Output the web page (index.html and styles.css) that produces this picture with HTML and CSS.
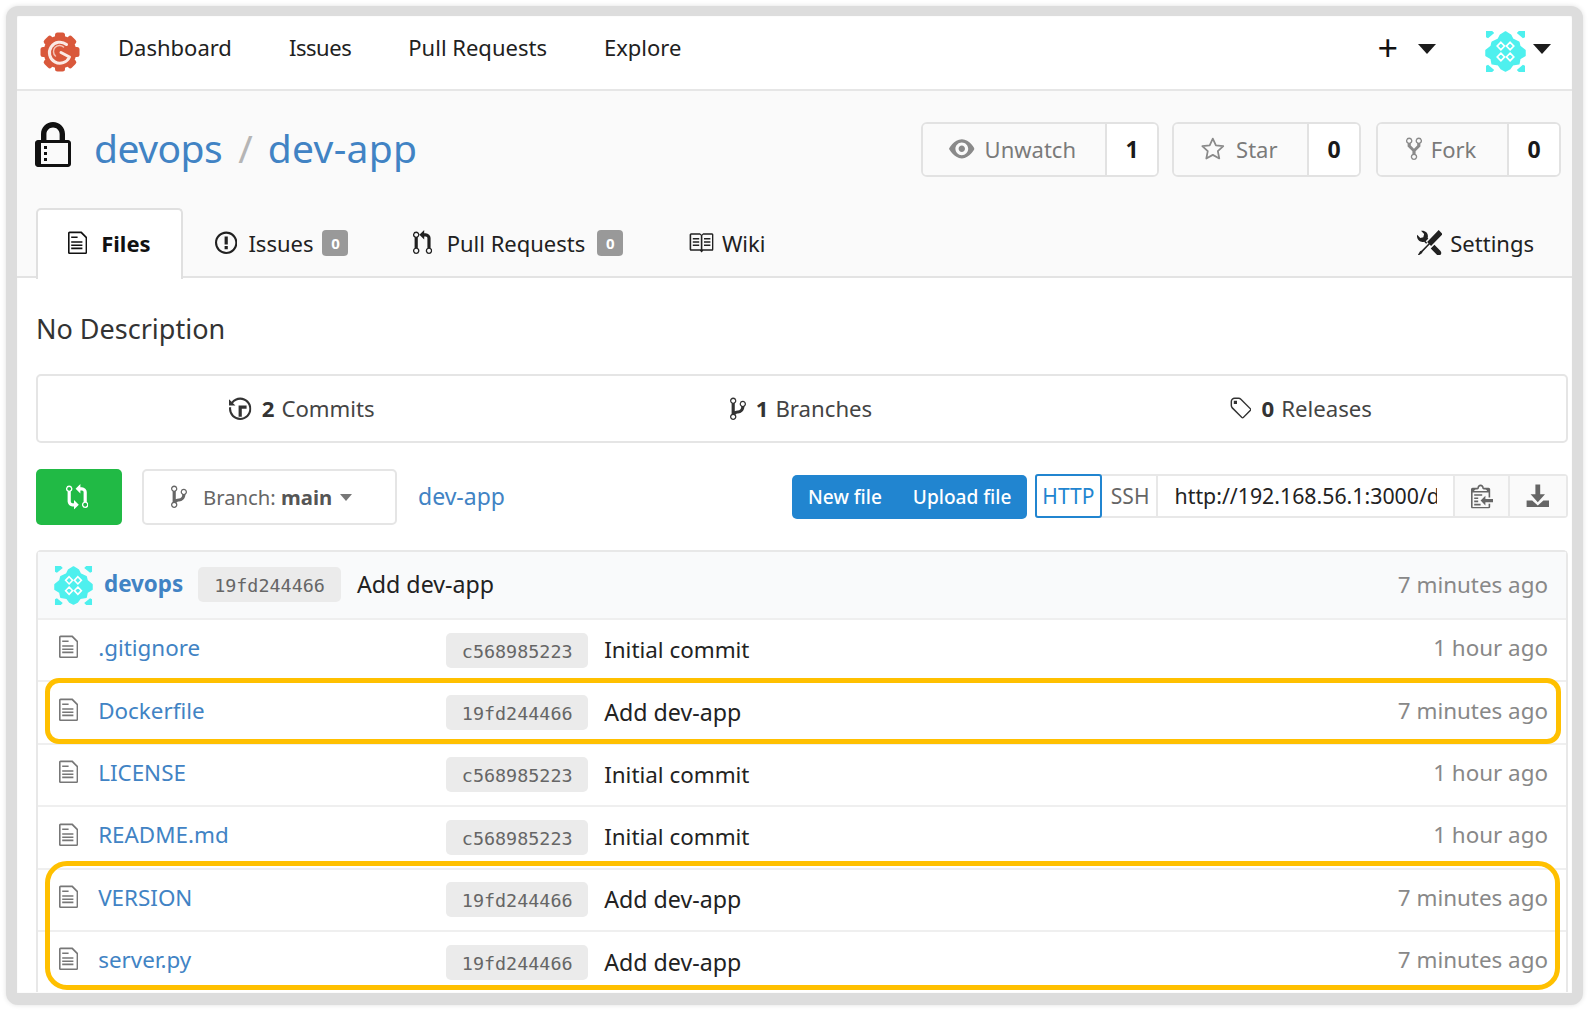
FILE: index.html
```html
<!DOCTYPE html>
<html lang="en">
<head>
<meta charset="utf-8">
<title>devops / dev-app</title>
<link rel="stylesheet" href="styles.css">
</head>
<body>
<svg class="defs" width="0" height="0" aria-hidden="true">
  <symbol id="i-file" viewBox="0 0 12 16"><path d="M6 5H2V4h4v1zM2 8h7V7H2v1zm0 2h7V9H2v1zm0 2h7v-1H2v1zm10-7.500V14c0 .55-.45 1-1 1H1c-.55 0-1-.45-1-1V2c0-.55.45-1 1-1h7.500L12 4.500zM11 5L8 2H1v12h10V5z"/></symbol>
  <symbol id="i-issue" viewBox="0 0 14 16"><path d="M7 2.300c3.140 0 5.700 2.560 5.700 5.700s-2.560 5.700-5.700 5.700A5.710 5.710 0 0 1 1.300 8c0-3.140 2.560-5.700 5.700-5.700zM7 1C3.140 1 0 4.140 0 8s3.140 7 7 7 7-3.140 7-7-3.140-7-7-7zm1 3H6v5h2V4zm0 6H6v2h2v-2z"/></symbol>
  <symbol id="i-pr" viewBox="0 0 12 16"><path d="M11 11.280V5c-.03-.78-.34-1.470-.94-2.060C9.460 2.350 8.780 2.030 8 2H7V0L4 3l3 3V4h1c.27.02.48.11.69.31.21.2.3.42.31.69v6.280A1.993 1.993 0 0 0 10 15a1.993 1.993 0 0 0 1-3.720zm-1 2.920c-.66 0-1.200-.55-1.200-1.200 0-.65.55-1.200 1.200-1.200.65 0 1.200.55 1.200 1.200 0 .65-.55 1.200-1.200 1.200zM4 3c0-1.110-.89-2-2-2a1.993 1.993 0 0 0-1 3.720v6.560A1.993 1.993 0 0 0 2 15a1.993 1.993 0 0 0 1-3.720V4.720c.59-.34 1-.98 1-1.720zm-.8 10c0 .66-.55 1.200-1.200 1.200-.65 0-1.200-.55-1.200-1.200 0-.65.55-1.200 1.200-1.200.65 0 1.200.55 1.200 1.200zM2 4.200C1.340 4.200.8 3.650.8 3c0-.65.55-1.200 1.200-1.200.65 0 1.200.55 1.200 1.200 0 .65-.55 1.200-1.200 1.200z"/></symbol>
  <symbol id="i-book" viewBox="0 0 16 16"><path d="M3 5h4v1H3V5zm0 3h4V7H3v1zm0 2h4V9H3v1zm11-5h-4v1h4V5zm0 2h-4v1h4V7zm0 2h-4v1h4V9zm2-6v9c0 .55-.45 1-1 1H9.500l-1 1-1-1H2c-.55 0-1-.45-1-1V3c0-.55.45-1 1-1h5.500l1 1 1-1H15c.55 0 1 .45 1 1zm-8 .5L7.500 3H2v9h6V3.500zm7-.5H9.500l-.5.5V12h6V3z"/></symbol>
  <symbol id="i-tools" viewBox="0 0 16 16"><path d="M4.480 7.270c.26.26 1.280 1.330 1.280 1.330l.56-.58-.88-.91 1.690-1.800s-.76-.74-.43-.45c.32-1.190.03-2.510-.87-3.440C4.930.5 3.660.2 2.520.51l1.930 2-.51 1.960-1.890.52-1.930-2C-.19 4.170.1 5.480 1 6.400c.94.98 2.320 1.260 3.480.87zm6.440 1.940l-2.330 2.300 3.840 3.980c.31.33.73.49 1.140.49.41 0 .82-.16 1.140-.49.63-.65.63-1.700 0-2.350l-3.790-3.930zM16 2.530L13.550 0 6.330 7.460l.88.91-4.310 4.460-.99.53-1.390 2.270.35.37 2.200-1.440.51-1.020L7.900 9.080l.88.91L16 2.530z"/></symbol>
  <symbol id="i-eye" viewBox="0 0 16 16"><path d="M8.060 2C3 2 0 8 0 8s3 6 8.060 6C13 14 16 8 16 8s-3-6-7.940-6zM8 12c-2.200 0-4-1.780-4-4 0-2.200 1.800-4 4-4 2.220 0 4 1.800 4 4 0 2.220-1.780 4-4 4zm2-4c0 1.110-.89 2-2 2-1.110 0-2-.89-2-2 0-1.110.89-2 2-2 1.110 0 2 .89 2 2z"/></symbol>
  <symbol id="i-star" viewBox="0 0 16 16"><path d="M8 1.600l1.950 4.200 4.600.55-3.400 3.150.9 4.550L8 11.800l-4.050 2.250.9-4.550-3.400-3.150 4.600-.55z" fill="none" stroke="currentColor" stroke-width="1.100" stroke-linejoin="round"/></symbol>
  <symbol id="i-fork" viewBox="0 0 10 16"><path d="M8 1a1.993 1.993 0 0 0-1 3.720V6L5 8 3 6V4.720A1.993 1.993 0 0 0 2 1a1.993 1.993 0 0 0-1 3.720V6.500l3 3v1.780A1.993 1.993 0 0 0 5 15a1.993 1.993 0 0 0 1-3.720V9.500l3-3V4.720A1.993 1.993 0 0 0 8 1zM2 4.200C1.340 4.200.8 3.650.8 3c0-.65.55-1.200 1.200-1.200.65 0 1.200.55 1.200 1.200 0 .65-.55 1.200-1.200 1.200zm3 10c-.66 0-1.200-.55-1.200-1.200 0-.65.55-1.200 1.200-1.200.65 0 1.200.55 1.200 1.200 0 .65-.55 1.200-1.200 1.200zm3-10c-.66 0-1.200-.55-1.200-1.200 0-.65.55-1.200 1.200-1.200.65 0 1.200.55 1.200 1.200 0 .65-.55 1.200-1.200 1.200z"/></symbol>
  <symbol id="i-branch" viewBox="0 0 10 16"><path d="M10 5c0-1.110-.89-2-2-2a1.993 1.993 0 0 0-1 3.720v.3c-.02.52-.23.98-.63 1.380-.4.4-.86.61-1.380.63-.83.02-1.480.16-2 .45V4.720a1.993 1.993 0 0 0-1-3.720C.88 1 0 1.890 0 3a2 2 0 0 0 1 1.720v6.560c-.59.35-1 .99-1 1.720 0 1.110.89 2 2 2 1.110 0 2-.89 2-2 0-.53-.2-1-.53-1.360.09-.06.48-.41.59-.47.25-.11.56-.17.94-.17 1.050-.05 1.950-.45 2.750-1.250S8.950 7.770 9 6.730h-.02C9.590 6.370 10 5.730 10 5zM2 1.800c.66 0 1.200.55 1.200 1.200 0 .65-.55 1.200-1.200 1.200C1.350 4.200.8 3.650.8 3c0-.65.55-1.200 1.200-1.200zm0 12.410c-.66 0-1.200-.55-1.200-1.200 0-.65.55-1.200 1.200-1.200.65 0 1.200.55 1.200 1.200 0 .65-.55 1.200-1.200 1.200zm6-8c-.66 0-1.200-.55-1.200-1.200 0-.65.55-1.200 1.200-1.200.65 0 1.200.55 1.200 1.200 0 .65-.55 1.200-1.200 1.200z"/></symbol>
  <symbol id="i-history" viewBox="0 0 14 16"><path d="M8 13H6V6h5v2H8v5zM7 1C4.810 1 2.870 2.020 1.590 3.590L0 2v4h4L2.500 4.500C3.550 3.170 5.170 2.300 7 2.300c3.140 0 5.700 2.560 5.700 5.700s-2.560 5.700-5.700 5.700A5.710 5.710 0 0 1 1.300 8c0-.34.03-.67.09-1H.08C.03 7.330 0 7.660 0 8c0 3.860 3.140 7 7 7s7-3.140 7-7-3.140-7-7-7z"/></symbol>
  <symbol id="i-tag" viewBox="0 0 14 16"><path d="M7.730 1.730C7.260 1.260 6.620 1 5.960 1H3.500C2.130 1 1 2.130 1 3.500v2.470c0 .66.27 1.300.73 1.770l6.060 6.060c.39.39 1.020.39 1.410 0l4.590-4.590a.996.996 0 0 0 0-1.410L7.730 1.730zM2.380 7.090c-.31-.3-.47-.7-.47-1.130V3.500c0-.88.72-1.590 1.590-1.590h2.470c.42 0 .83.16 1.130.47l6.140 6.130-4.730 4.730-6.130-6.150zM3.010 3h2v2H3V3h.01z"/></symbol>
  <symbol id="i-clip" viewBox="0 0 14 16"><path d="M2 13h4v1H2v-1zm5-6H2v1h5V7zm2 3V8l-3 3 3 3v-2h5v-2H9zM4.500 9H2v1h2.500V9zM2 12h2.500v-1H2v1zm9 1h1v2c-.02.28-.11.52-.3.7-.19.18-.42.28-.7.3H1c-.55 0-1-.45-1-1V4c0-.55.45-1 1-1h3c0-1.110.89-2 2-2 1.110 0 2 .89 2 2h3c.55 0 1 .45 1 1v5h-1V6H1v9h10v-2zM2 5h8c0-.55-.45-1-1-1H8c-.55 0-1-.45-1-1s-.45-1-1-1-1 .45-1 1-.45 1-1 1H3c-.55 0-1 .45-1 1z"/></symbol>
  <symbol id="i-download" viewBox="0 0 16 16"><path d="M6.500 1h3v6h3L8 12 3.500 7h3zM1 11h3.500L8 14l3.500-3H15v4H1z"/></symbol>
  <symbol id="i-lock" viewBox="0 0 12 16"><path d="M4 13H3v-1h1v1zm8-6v7c0 .55-.45 1-1 1H1c-.55 0-1-.45-1-1V7c0-.55.45-1 1-1h1V4c0-2.200 1.800-4 4-4s4 1.800 4 4v2h1c.55 0 1 .45 1 1zM3.800 6h4.410V4c0-1.220-.98-2.200-2.200-2.200-1.220 0-2.200.98-2.200 2.200v2H3.800zM11 7H2v7h9V7zM4 8H3v1h1V8zm0 2H3v1h1v-1z"/></symbol>
  <symbol id="i-compare" viewBox="0 0 14 16"><path d="M5 12H4c-.27-.02-.48-.11-.69-.31-.21-.2-.3-.42-.31-.69V4.720A1.993 1.993 0 0 0 2 1a1.993 1.993 0 0 0-1 3.720V11c.03.78.34 1.470.94 2.060.6.59 1.280.91 2.060.94h1v2l3-3-3-3v2zM2 1.800c.66 0 1.200.55 1.200 1.200 0 .65-.55 1.200-1.200 1.200C1.350 4.200.8 3.650.8 3c0-.65.55-1.200 1.200-1.200zm11 9.480V5c-.03-.78-.34-1.470-.94-2.060-.6-.59-1.280-.91-2.060-.94H9V0L6 3l3 3V4h1c.27.02.48.11.69.31.21.2.3.42.31.69v6.280A1.993 1.993 0 0 0 12 15a1.993 1.993 0 0 0 1-3.720zm-1 2.920c-.66 0-1.200-.55-1.200-1.200 0-.65.55-1.200 1.200-1.200.65 0 1.200.55 1.200 1.200 0 .65-.55 1.200-1.200 1.200z"/></symbol>
  <symbol id="i-avatar" viewBox="0 0 40 40">
    <path fill="#4ef0ee" stroke="#4ef0ee" stroke-width="1.500" stroke-linejoin="round" d="M20 1l5 3 2 4 6 3 1 4 5 4v5l-5 3-1 5-6 1-3 4-4 2-4-2-3-4-6-1-1-5-5-3v-5l5-4 1-4 6-3 2-4z"/>
    <path fill="#4ef0ee" d="M1 0h6l2 2-6 5-2-1zM39 0h-6l-2 2 6 5 2-1zM1 40h6l2-2-6-5-2 1zM39 40h-6l-2-2 6-5 2 1z"/>
    <g fill="none" stroke="#fff" stroke-width="1.600"><path d="M15.500 11l3.600 3.700-3.600 3.700-3.600-3.700zM24.500 11l3.600 3.700-3.600 3.700-3.600-3.700zM15.500 21.600l3.600 3.700-3.600 3.700-3.600-3.700zM24.500 21.600l3.600 3.700-3.600 3.700-3.600-3.700z"/></g>
  </symbol>
</svg>

<div class="frame">
  <nav class="nav">
    <svg class="logo" viewBox="0 0 40 40">
      <g fill="#d9583b">
        <circle cx="20" cy="20" r="16.500"/>
        <rect x="15" y="0.500" width="10" height="8" rx="2.500"/>
        <rect x="15" y="0.500" width="10" height="8" rx="2.500" transform="rotate(45 20 20)"/>
        <rect x="15" y="0.500" width="10" height="8" rx="2.500" transform="rotate(90 20 20)"/>
        <rect x="15" y="0.500" width="10" height="8" rx="2.500" transform="rotate(135 20 20)"/>
        <rect x="15" y="0.500" width="10" height="8" rx="2.500" transform="rotate(180 20 20)"/>
        <rect x="15" y="0.500" width="10" height="8" rx="2.500" transform="rotate(225 20 20)"/>
        <rect x="15" y="0.500" width="10" height="8" rx="2.500" transform="rotate(270 20 20)"/>
        <rect x="15" y="0.500" width="10" height="8" rx="2.500" transform="rotate(315 20 20)"/>
      </g>
      <path d="M26.500 12.500A10.500 10.500 0 1 0 29.500 25L21 20.500" fill="none" stroke="#fbe9e4" stroke-width="3" stroke-linecap="round" stroke-linejoin="round"/>
      <path d="M23.500 15A6 6 0 1 0 15.500 24" fill="none" stroke="#f4c3b6" stroke-width="1.500" stroke-linecap="round"/>
    </svg>
    <div class="nav-links">
      <a class="nav-link">Dashboard</a>
      <a class="nav-link nav-tight">Issues</a>
      <a class="nav-link">Pull Requests</a>
      <a class="nav-link">Explore</a>
    </div>
    <div class="nav-right">
      <span class="plus">+</span>
      <span class="caret caret-plus"></span>
      <svg class="nav-avatar"><use href="#i-avatar"/></svg>
      <span class="caret caret-user"></span>
    </div>
  </nav>

  <header class="head">
    <div class="title-row">
      <h1 class="title">
        <svg class="lock"><use href="#i-lock"/></svg>
        <a class="title-link title-owner">devops</a>
        <span class="slash">/</span>
        <a class="title-link title-repo">dev-app</a>
      </h1>
      <div class="actions">
        <div class="labeled w-watch"><span class="lb-main"><svg class="ic-eye"><use href="#i-eye"/></svg>Unwatch</span><span class="lb-count">1</span></div>
        <div class="labeled w-star"><span class="lb-main"><svg class="ic-star"><use href="#i-star"/></svg>Star</span><span class="lb-count">0</span></div>
        <div class="labeled w-fork"><span class="lb-main"><svg class="ic-fork"><use href="#i-fork"/></svg>Fork</span><span class="lb-count">0</span></div>
      </div>
    </div>
    <div class="tabs">
      <a class="tab tab-active"><svg class="ic-12"><use href="#i-file"/></svg>Files</a>
      <a class="tab tab-issues"><svg class="ic-14"><use href="#i-issue"/></svg>Issues<span class="badge">0</span></a>
      <a class="tab tab-pulls"><svg class="ic-12"><use href="#i-pr"/></svg>Pull Requests<span class="badge">0</span></a>
      <a class="tab tab-wiki"><svg class="ic-16"><use href="#i-book"/></svg>Wiki</a>
      <a class="tab tab-settings"><svg class="ic-16"><use href="#i-tools"/></svg>Settings</a>
    </div>
  </header>

  <main class="content">
    <p class="desc">No Description</p>

    <div class="stats">
      <div class="stat"><svg class="ic-14"><use href="#i-history"/></svg><b>2</b> Commits</div>
      <div class="stat"><svg class="ic-10"><use href="#i-branch"/></svg><b>1</b> Branches</div>
      <div class="stat"><svg class="ic-14"><use href="#i-tag"/></svg><b>0</b> Releases</div>
    </div>

    <div class="toolbar">
      <button class="compare"><svg class="ic-compare"><use href="#i-compare"/></svg></button>
      <button class="branch"><svg class="ic-10"><use href="#i-branch"/></svg><span>Branch: <b>main</b></span><i class="caret-small"></i></button>
      <a class="crumb">dev-app</a>
      <div class="tool-right">
        <div class="blue-group"><span>New file</span><span>Upload file</span></div>
        <div class="clone">
          <span class="proto proto-on">HTTP</span>
          <span class="proto proto-ssh">SSH</span>
          <span class="url"><span class="url-text">http://192.168.56.1:3000/devops/dev-app.git</span></span>
          <span class="clone-ic"><svg class="ic-14"><use href="#i-clip"/></svg></span>
          <span class="clone-ic"><svg class="ic-dl"><use href="#i-download"/></svg></span>
        </div>
      </div>
    </div>

    <section class="table">
      <div class="row row-head">
        <svg class="row-avatar"><use href="#i-avatar"/></svg>
        <a class="author">devops</a>
        <code class="sha">19fd244466</code>
        <span class="msg msg-wide">Add dev-app</span>
        <span class="age">7 minutes ago</span>
      </div>
      <div class="row"><svg class="ic-12 file-ic"><use href="#i-file"/></svg><a class="fname">.gitignore</a><code class="sha">c568985223</code><span class="msg">Initial commit</span><span class="age">1 hour ago</span></div>
      <div class="row"><svg class="ic-12 file-ic"><use href="#i-file"/></svg><a class="fname">Dockerfile</a><code class="sha">19fd244466</code><span class="msg msg-wide">Add dev-app</span><span class="age">7 minutes ago</span></div>
      <div class="row"><svg class="ic-12 file-ic"><use href="#i-file"/></svg><a class="fname">LICENSE</a><code class="sha">c568985223</code><span class="msg">Initial commit</span><span class="age">1 hour ago</span></div>
      <div class="row"><svg class="ic-12 file-ic"><use href="#i-file"/></svg><a class="fname">README.md</a><code class="sha">c568985223</code><span class="msg">Initial commit</span><span class="age">1 hour ago</span></div>
      <div class="row"><svg class="ic-12 file-ic"><use href="#i-file"/></svg><a class="fname">VERSION</a><code class="sha">19fd244466</code><span class="msg msg-wide">Add dev-app</span><span class="age">7 minutes ago</span></div>
      <div class="row"><svg class="ic-12 file-ic"><use href="#i-file"/></svg><a class="fname">server.py</a><code class="sha">19fd244466</code><span class="msg msg-wide">Add dev-app</span><span class="age">7 minutes ago</span></div>
    </section>
  </main>

  <div class="mark mark-one"></div>
  <div class="mark mark-two"></div>
</div>
</body>
</html>
```
FILE: styles.css
```css
* { box-sizing: border-box; }
html, body { margin: 0; padding: 0; background: #fff; }
body {
  width: 1588px;
  height: 1011px;
  padding: 6px 5px 6px 6px;
  overflow: hidden;
  font-family: "Noto Sans", "Open Sans", sans-serif;
  font-size: 22.4px;
  color: #212121;
}
svg { fill: currentColor; flex: none; display: block; }
.defs { position: absolute; }
a { color: #4183c4; text-decoration: none; }

.frame {
  position: relative;
  width: 1577px;
  height: 999px;
  border: solid #dddddd;
  border-width: 10px 11px 12px 11px;
  border-radius: 12px;
  background: #fff;
  overflow: hidden;
  box-shadow: 0 0 5px rgba(0,0,0,.12), inset 0 0 2px rgba(0,0,0,.06);
}

/* nav */
.nav {
  display: flex;
  align-items: center;
  height: 75px;
  padding: 0 21px 2px 23px;
  border-bottom: 2px solid #e6e6e6;
}
.logo { width: 40px; height: 42px; }
.nav-links { display: flex; gap: 57px; margin: -10px 0 0 38px; font-size: 22px; }
.nav-link { color: #212121; }
.nav-tight { letter-spacing: -.45px; }
.nav-right { margin-left: auto; display: flex; align-items: center; }
.plus { font-size: 36px; line-height: 36px; color: #111; font-weight: 400; margin-top: -8px; }
.caret {
  width: 0; height: 0;
  border: 9px solid transparent;
  border-top: 10px solid #1c1c1c;
  border-bottom: 0;
  display: block;
}
.caret-plus { margin-left: 20px; margin-right: 49px; margin-top: -5px; }
.nav-avatar { width: 41px; height: 41px; margin-right: 7px; }
.caret-user { margin-top: -5px; }

/* head */
.head {
  background: #fafafa;
  border-bottom: 2px solid #e3e3e3;
  height: 187px;
  padding: 31px 11px 0 18px;
  font-size: 22px;
}
.title-row { display: flex; justify-content: space-between; align-items: flex-start; height: 55px; }
.title { margin: -2px 0 0; display: flex; align-items: center; height: 55px; font-weight: 400; font-size: 39px; }
.lock { width: 36px; height: 48px; color: #111; margin-right: 23px; margin-top: -3px; }
.title-link { line-height: 55px; }
.title-owner { letter-spacing: -.5px; }
.title-repo { letter-spacing: .3px; }
.slash { color: #b5b5b5; margin: 0 15px 0 16px; }
.actions { display: flex; }
.labeled {
  display: flex;
  height: 55px;
  border: 2px solid #e2e2e2;
  border-radius: 6px;
  overflow: hidden;
}
.w-watch { width: 238px; }
.w-star { width: 189px; margin-left: 13px; }
.w-fork { width: 185px; margin-left: 15px; }
.lb-main {
  flex: 1;
  display: flex;
  align-items: center;
  justify-content: center;
  padding: 0 3px 2px 0;
  color: #7a7a7a;
  background: #fafafa;
  border-right: 2px solid #e2e2e2;
}
.lb-count {
  width: 50px;
  display: flex;
  align-items: center;
  justify-content: center;
  padding-bottom: 2px;
  font-size: 23px;
  font-weight: 700;
  background: #fff;
  color: #1a1a1a;
}
.ic-eye { width: 25.6px; height: 25.6px; margin-right: 10px; color: #8a8a8a; }
.ic-star { width: 25.6px; height: 25.6px; margin-right: 10px; color: #8a8a8a; }
.ic-fork { width: 16px; height: 25.6px; margin-right: 9px; color: #8a8a8a; }

/* tabs */
.tabs { display: flex; align-items: stretch; height: 69px; margin: 31px 0 0 1px; }
.tab {
  display: flex;
  align-items: center;
  color: #212121;
  height: 71px;
  padding-bottom: 2px;
}
.tab-active {
  width: 147px;
  padding: 0 0 3px 30px;
  background: #fff;
  border: 2px solid #e0e0e0;
  border-bottom: 0;
  border-radius: 5px 5px 0 0;
  font-weight: 700;
  color: #111;
}
.tab svg { margin-right: 11px; }
.tab-active svg { margin-right: 14px; }
.tab-issues { margin-left: 32px; }
.tab-pulls { margin-left: 65px; }
.tab-pulls svg { margin-right: 14px; }
.tab-wiki { margin-left: 65px; }
.tab-wiki svg { margin-right: 8px; }
.tab-settings { margin-left: auto; margin-right: 27px; }
.tab-settings svg { margin-right: 8px; }
.ic-10 { width: 16px; height: 25.6px; }
.ic-12 { width: 19.2px; height: 25.6px; }
.ic-14 { width: 22.4px; height: 25.6px; }
.ic-16 { width: 25.6px; height: 25.6px; }
.badge {
  display: flex;
  align-items: center;
  justify-content: center;
  width: 26px;
  height: 26px;
  margin-left: 12px;
  border-radius: 4px;
  background: #999;
  color: #fff;
  font-size: 15px;
  font-weight: 700;
}
.tab-issues .badge { margin-left: 9px; }

/* content */
.content { padding: 0 4px 0 19px; }
.desc { margin: 0; height: 96px; padding-top: 33px; font-size: 27px; line-height: 36px; color: #333; }
.stats {
  display: grid;
  grid-template-columns: 528px 470px 529px;
  height: 69px;
  border: 2px solid #e5e5e5;
  border-radius: 5px;
  font-size: 22.200px;
}
.stat { display: flex; align-items: center; justify-content: center; color: #444; }
.stat svg { margin-right: 10px; color: #333; }
.stat b { margin-right: 7px; color: #333; }

.toolbar { display: flex; align-items: flex-start; margin-top: 26px; height: 56px; }
.compare {
  width: 86px;
  height: 56px;
  display: flex;
  align-items: center;
  justify-content: center;
  background: #21ba45;
  border: 0;
  border-radius: 5px;
  color: #fff;
  padding: 0 4px 0 0;
}
.ic-compare { width: 22.4px; height: 25.6px; }
.branch {
  width: 255px;
  height: 56px;
  margin-left: 20px;
  display: flex;
  align-items: center;
  padding: 0 0 0 27px;
  background: #fff;
  border: 2px solid #e5e5e5;
  border-radius: 5px;
  font: inherit;
  font-size: 20.300px;
  color: #666;
}
.branch svg { margin-right: 16px; color: #666; }
.branch b { color: #555; }
.caret-small {
  display: block;
  margin-left: 8px;
  border: 6px solid transparent;
  border-top: 7px solid #777;
  border-bottom: 0;
}
.crumb { margin-left: 21px; line-height: 54px; font-size: 23px; }
.tool-right { margin-left: auto; display: flex; align-items: flex-start; }
.blue-group {
  display: flex;
  align-items: center;
  width: 235px;
  height: 44px;
  margin-top: 6px;
  padding-left: 16px;
  gap: 31px;
  background: #2185d0;
  border-radius: 5px;
  color: #fff;
  font-size: 19.100px;
  font-weight: 500;
}
.clone { display: flex; width: 533px; height: 44px; margin: 5px 0 0 8px; border: 2px solid #e8e8e8; border-left: 0; border-radius: 4px; font-size: 21.300px; }
.proto { display: flex; align-items: center; justify-content: center; color: #666; border-right: 2px solid #e8e8e8; font-size: 21px; padding-bottom: 1px; }
.proto-ssh { width: 56px; padding-left: 3px; }
.proto-on {
  width: 67px;
  margin: -2px 0;
  color: #2185d0;
  border: 2px solid #2185d0;
  border-radius: 3px;
  background: #fff;
}
.url { display: flex; align-items: center; width: 299px; padding: 0 0 2px 17px; border-right: 2px solid #e8e8e8; color: #222; }
.url-text { display: block; white-space: nowrap; overflow: hidden; width: 262px; }
.clone-ic { display: flex; align-items: center; justify-content: center; width: 55px; background: #fafafa; color: #666; border-right: 2px solid #e8e8e8; }
.clone-ic:last-child { width: 56px; border-right: 0; }
.ic-dl { width: 25.6px; height: 25.6px; }

/* table */
.table { margin-top: 25px; border: 2px solid #e8e8e8; border-bottom: 0; border-radius: 5px 5px 0 0; }
.row {
  display: flex;
  align-items: center;
  height: 62.400px;
  padding: 0 18px 0 21px;
  border-top: 2px solid #efefef;
}
.row-head { height: 66px; border-top: 0; background: #f9fafb; padding-left: 16px; }
.row-avatar { width: 39px; height: 39px; }
.author { font-weight: 700; margin: -4px 0 0 11px; width: 94px; }
.fname { width: 348px; margin-left: 20px; margin-top: -5px; }
.file-ic { color: #777; margin-top: -6px; }
.sha {
  display: block;
  width: 142px;
  height: 35px;
  line-height: 37px;
  text-align: center;
  font-family: "DejaVu Sans Mono", "Liberation Mono", monospace;
  font-size: 18.400px;
  color: #666;
  background: #ebebeb;
  border-radius: 5px;
}
.msg { margin-left: 16px; margin-top: -1px; color: #222; font-size: 22.400px; }
.msg-wide { font-size: 23.200px; }
.row-head .sha { width: 143px; margin-top: -2px; }
.row-head .msg { margin-top: -3px; }
.age { margin-left: auto; margin-top: -5px; color: #888; }
.row-head .age { margin-top: -2px; }

/* highlight outlines */
.mark { position: absolute; border: 5px solid #ffc000; pointer-events: none; }
.mark-one { left: 28px; top: 662px; width: 1516px; height: 66px; border-radius: 14px; }
.mark-two { left: 28px; top: 845px; width: 1515px; height: 129px; border-radius: 22px; }
```
